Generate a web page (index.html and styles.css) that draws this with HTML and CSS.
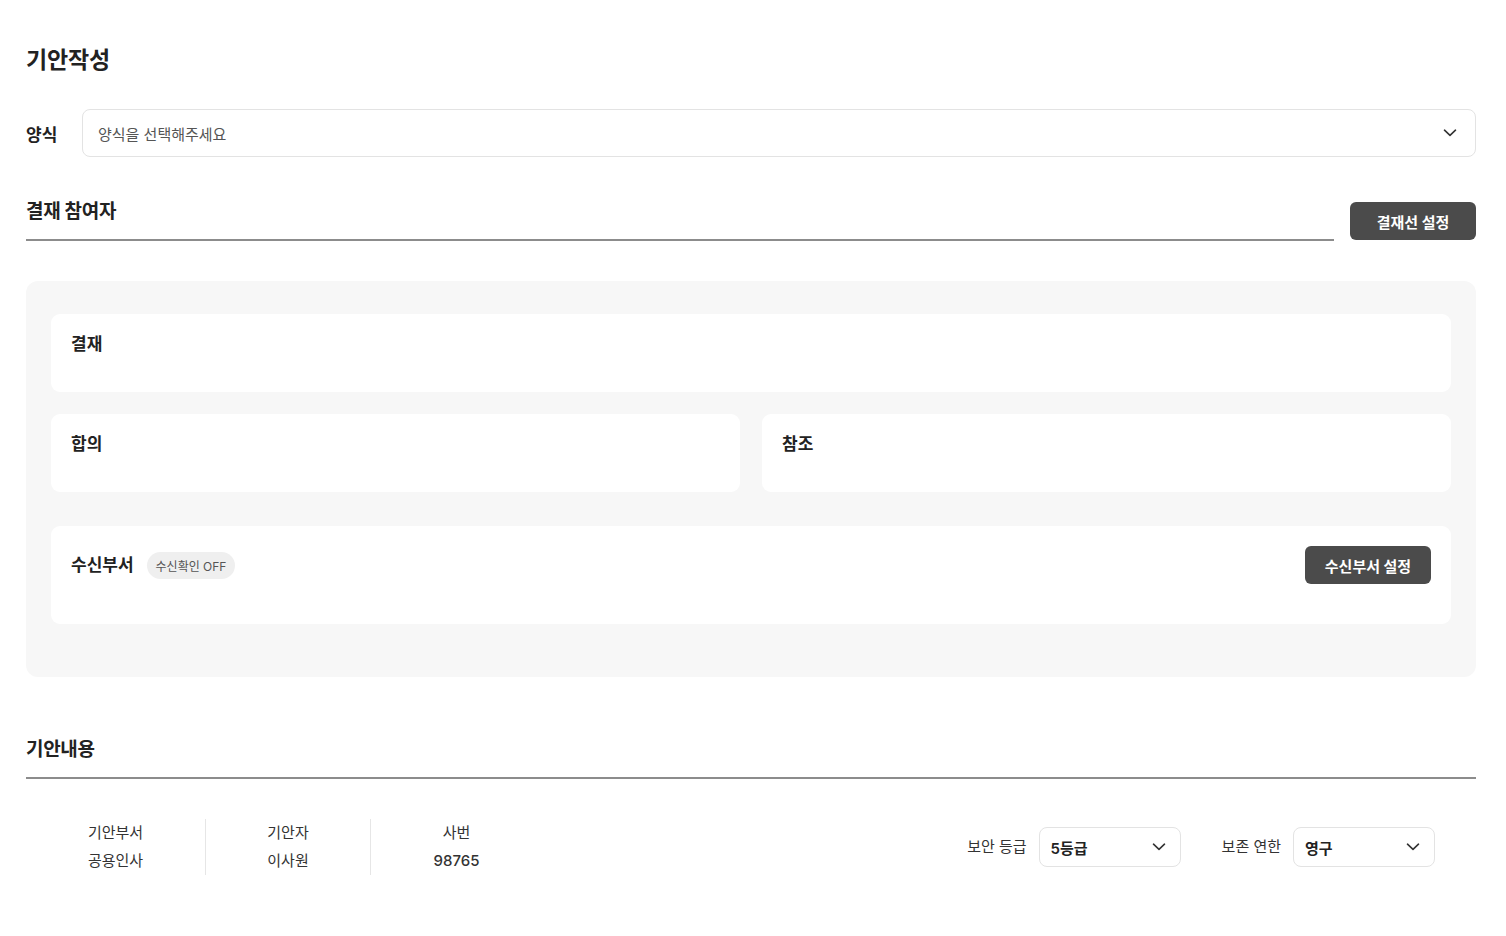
FILE: index.html
```html
<!DOCTYPE html>
<html lang="ko">
<head>
<meta charset="utf-8">
<title>기안작성</title>
<link rel="stylesheet" href="styles.css">
</head>
<body>
<div class="page">
  <h1 class="page-title">기안작성</h1>

  <div class="form-row">
    <span class="form-label">양식</span>
    <div class="select select-lg">
      <span class="select-placeholder">양식을 선택해주세요</span>
      <svg class="chev" width="14" height="8" viewBox="0 0 14 8"><path d="M1.5 1.2 L7 6.3 L12.5 1.2" fill="none" stroke="#333" stroke-width="1.6" stroke-linecap="round" stroke-linejoin="round"/></svg>
    </div>
  </div>

  <div class="section-head">
    <div class="section-title-wrap">
      <h2 class="section-title">결재 참여자</h2>
    </div>
    <button class="btn-dark">결재선 설정</button>
  </div>

  <div class="panel">
    <div class="card card-row">
      <span class="card-label">결재</span>
    </div>
    <div class="card-grid">
      <div class="card card-row"><span class="card-label">합의</span></div>
      <div class="card card-row"><span class="card-label">참조</span></div>
    </div>
    <div class="card card-recv">
      <div class="recv-left">
        <span class="card-label">수신부서</span>
        <span class="pill">수신확인 OFF</span>
      </div>
      <button class="btn-dark btn-sm">수신부서 설정</button>
    </div>
  </div>

  <div class="section-head section-head-2">
    <div class="section-title-wrap">
      <h2 class="section-title">기안내용</h2>
    </div>
  </div>

  <div class="info-row">
    <div class="info-cols">
      <div class="info-col c1"><div>기안부서</div><div>공용인사</div></div>
      <div class="info-col c2"><div>기안자</div><div>이사원</div></div>
      <div class="info-col c3"><div>사번</div><div class="num">98765</div></div>
    </div>
    <div class="info-selects">
      <div class="field">
        <span class="field-label">보안 등급</span>
        <div class="select select-sm">
          <span class="select-value">5등급</span>
          <svg class="chev" width="14" height="8" viewBox="0 0 14 8"><path d="M1.5 1.2 L7 6.3 L12.5 1.2" fill="none" stroke="#333" stroke-width="1.6" stroke-linecap="round" stroke-linejoin="round"/></svg>
        </div>
      </div>
      <div class="field">
        <span class="field-label">보존 연한</span>
        <div class="select select-sm">
          <span class="select-value">영구</span>
          <svg class="chev" width="14" height="8" viewBox="0 0 14 8"><path d="M1.5 1.2 L7 6.3 L12.5 1.2" fill="none" stroke="#333" stroke-width="1.6" stroke-linecap="round" stroke-linejoin="round"/></svg>
        </div>
      </div>
    </div>
  </div>
</div>
</body>
</html>
```

FILE: styles.css
```css
* { box-sizing: border-box; }
html, body { margin: 0; padding: 0; background: #fff; }
body {
  font-family: "Inter", "Noto Sans CJK KR", "Noto Sans", sans-serif;
  color: #222;
}
.page {
  padding: 44px 30px 40px 26px;
}
.page-title {
  margin: 0;
  font-size: 23px;
  line-height: 32px;
  font-weight: 700;
  color: #222;
  letter-spacing: -0.2px;
}
.form-row {
  margin-top: 33px;
  display: flex;
  align-items: center;
}
.form-label {
  width: 56px;
  font-size: 17px;
  font-weight: 700;
  color: #222;
}
.select {
  display: flex;
  align-items: center;
  justify-content: space-between;
  border: 1px solid #e3e3e3;
  border-radius: 8px;
  background: #fff;
}
.select-lg {
  flex: 1;
  height: 48px;
  padding: 0 18px 0 15px;
}
.select-placeholder {
  font-size: 15px;
  color: #555;
}
.section-head {
  margin-top: 44px;
  display: flex;
  align-items: flex-end;
  gap: 16px;
}
.section-title-wrap {
  flex: 1;
  border-bottom: 2px solid #8c8c8c;
  padding-bottom: 16px;
}
.section-title {
  margin: 0;
  font-size: 19px;
  line-height: 22px;
  font-weight: 700;
  color: #222;
  letter-spacing: -0.3px;
}
.btn-dark {
  font-family: inherit;
  border: none;
  background: #4b4b4b;
  color: #fff;
  font-size: 15px;
  font-weight: 700;
  height: 38px;
  width: 126px;
  border-radius: 6px;
  margin-bottom: 1px;
}
.panel {
  margin-top: 40px;
  background: #f7f7f7;
  border-radius: 12px;
  padding: 33px 25px 53px 25px;
  display: flex;
  flex-direction: column;
  gap: 22px;
}
.card {
  background: #fff;
  border-radius: 9px;
}
.card-row {
  height: 78px;
  padding: 19px 20px 0 20px;
}
.card-label {
  font-size: 17px;
  line-height: 22px;
  font-weight: 700;
  color: #222;
}
.card-grid {
  display: grid;
  grid-template-columns: 1fr 1fr;
  gap: 22px;
}
.card-recv {
  margin-top: 12px;
  height: 98px;
  padding: 20px 20px 0 20px;
  display: flex;
  justify-content: space-between;
  align-items: flex-start;
}
.recv-left {
  display: flex;
  align-items: center;
  height: 38px;
  gap: 13px;
}
.pill {
  display: inline-flex;
  align-items: center;
  height: 27px;
  padding: 0 9px;
  background: #efefef;
  border-radius: 14px;
  font-size: 12px;
  color: #555;
}
.btn-sm {
  width: 126px;
  height: 38px;
  margin: 0;
}
.section-head-2 {
  margin-top: 62px;
}
.info-row {
  margin-top: 40px;
  display: flex;
  align-items: center;
  justify-content: space-between;
  padding-right: 41px;
}
.info-cols {
  display: flex;
}
.info-col {
  text-align: center;
  font-size: 15px;
  line-height: 28px;
  color: #333;
}
.info-col.c1 { width: 179px; }
.info-col.c2 { width: 165px; border-left: 1px solid #e6e6e6; }
.info-col.c3 { width: 172px; border-left: 1px solid #e6e6e6; }
.num { font-weight: 500; }
.info-selects {
  display: flex;
  align-items: center;
  gap: 41px;
}
.field {
  display: flex;
  align-items: center;
  gap: 12px;
}
.field-label {
  font-size: 15px;
  color: #333;
  margin-top: -4px;
}
.select-sm {
  width: 142px;
  height: 40px;
  padding: 0 14px 0 11px;
}
.select-value {
  font-size: 15px;
  font-weight: 600;
  color: #222;
  margin-top: 1px;
}
```
